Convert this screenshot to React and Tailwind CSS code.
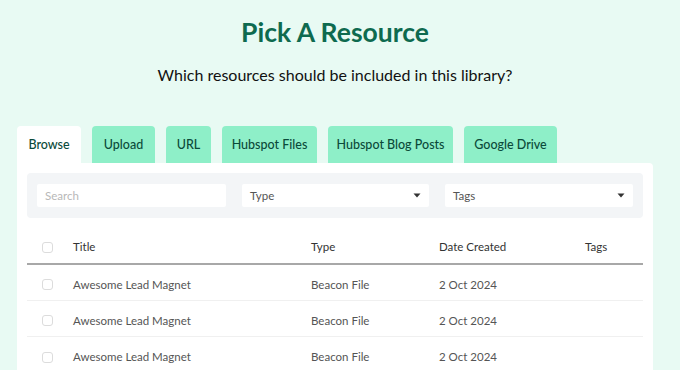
import React from "react";

const tabs = [
    { label: "Browse", w: "w-[64px]", active: true },
    { label: "Upload", w: "w-[63px]" },
    { label: "URL", w: "w-[45px]" },
    { label: "Hubspot Files", w: "w-[95px]" },
    { label: "Hubspot Blog Posts", w: "w-[125px]" },
    { label: "Google Drive", w: "w-[93px]" },
];

const rows = [
    { title: "Awesome Lead Magnet", type: "Beacon File", date: "2 Oct 2024" },
    { title: "Awesome Lead Magnet", type: "Beacon File", date: "2 Oct 2024" },
    { title: "Awesome Lead Magnet", type: "Beacon File", date: "2 Oct 2024" },
];

function Caret() {
    return (
        <svg width="8" height="5" viewBox="0 0 8 5" className="shrink-0">
            <path d="M0.5 0.5h7L4 4.5z" fill="#333" />
        </svg>
    );
}

function Checkbox() {
    return <span className="block w-[11px] h-[11px] rounded-[3px] border border-[#dcdcdc] bg-white" />;
}

export default function App() {
    return (
        <div
            className="w-[680px] h-[370px] overflow-hidden bg-[#e8faf3] pl-[17px] pr-[27px] flex flex-col"
            style={{ fontFamily: "Lato, 'Noto Sans', sans-serif" }}
        >
            {/* heading */}
            <h1 className="pt-[14px] text-center text-[26.5px] leading-[36px] font-bold text-[#0e6a4f]">
                Pick A Resource
            </h1>
            <p className="mt-[15px] text-center text-[16px] leading-[20px] text-[#111]">
                Which resources should be included in this library?
            </p>

            {/* tabs */}
            <div className="mt-[41px] flex gap-[11px]">
                {tabs.map((t) => (
                    <div
                        key={t.label}
                        className={`${t.w} h-[37px] pt-[2px] flex items-center justify-center rounded-t-[4px] text-[12.5px] font-medium text-[#0b4a3a] ${
                            t.active ? "bg-white" : "bg-[#8eefc8]"
                        }`}
                    >
                        {t.label}
                    </div>
                ))}
            </div>

            {/* panel */}
            <div className="flex-1 bg-white rounded-tr-[4px] p-[10px]">
                <div className="bg-[#f3f5f7] rounded-[4px] h-[45px] px-[10px] flex items-center gap-[16px]">
                    <div className="w-[189px] h-[23px] bg-white rounded-[2px] px-[8px] flex items-center text-[11.5px] text-[#b8b8b8]">
                        Search
                    </div>
                    <div className="w-[187px] h-[23px] bg-white rounded-[2px] px-[8px] flex items-center justify-between text-[11.5px] text-[#555]">
                        <span>Type</span>
                        <Caret />
                    </div>
                    <div className="w-[188px] h-[23px] bg-white rounded-[2px] px-[8px] flex items-center justify-between text-[11.5px] text-[#555]">
                        <span>Tags</span>
                        <Caret />
                    </div>
                </div>

                {/* table */}
                <div className="mt-[10px] text-[11.5px]">
                    <div className="h-[37px] pt-[3px] flex items-center border-b-2 border-[#a8a8a8] text-[#333]">
                        <div className="w-[46px] pl-[15px]"><Checkbox /></div>
                        <div className="w-[238px]">Title</div>
                        <div className="w-[128px]">Type</div>
                        <div className="w-[146px]">Date Created</div>
                        <div>Tags</div>
                    </div>
                    {rows.map((r, i) => (
                        <div
                            key={i}
                            className={`h-[36px] pt-[4px] flex items-center text-[#555] ${i < rows.length - 1 ? "border-b border-[#f0f0f0]" : ""}`}
                        >
                            <div className="w-[46px] pl-[15px]"><Checkbox /></div>
                            <div className="w-[238px]">{r.title}</div>
                            <div className="w-[128px]">{r.type}</div>
                            <div className="w-[146px]">{r.date}</div>
                            <div />
                        </div>
                    ))}
                </div>
            </div>
        </div>
    );
}
